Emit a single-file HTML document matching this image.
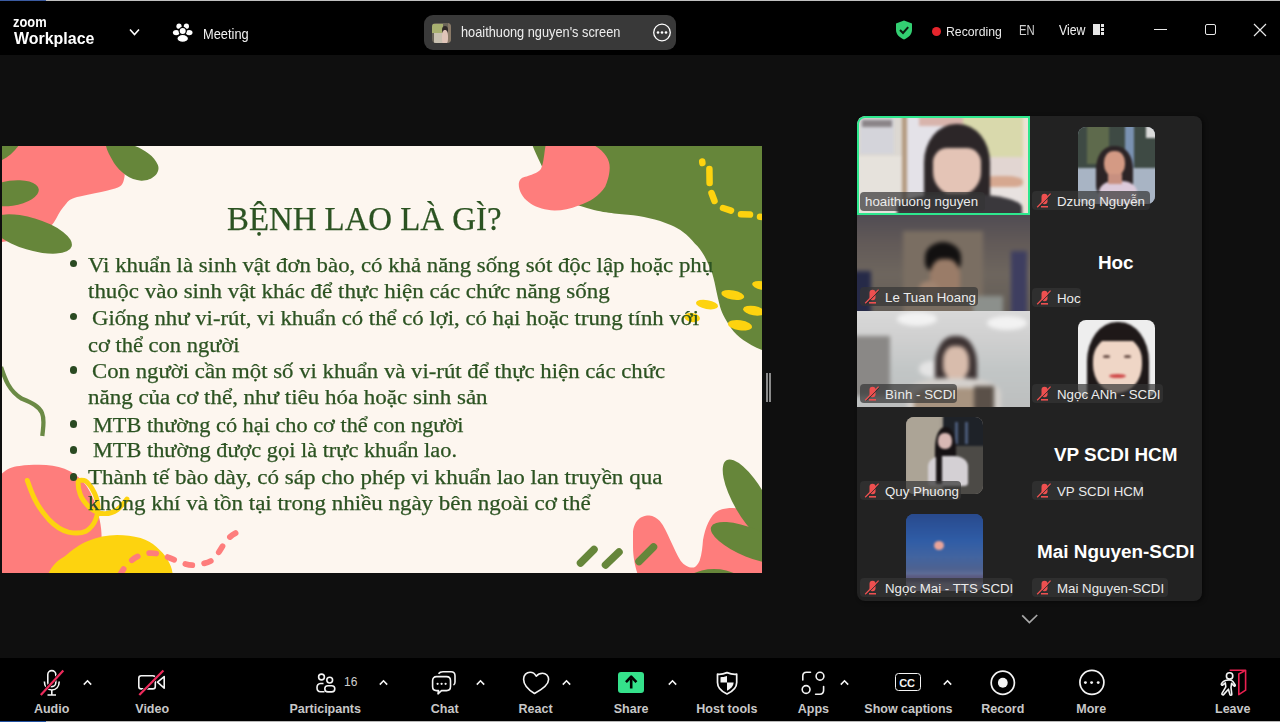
<!DOCTYPE html>
<html><head><meta charset="utf-8">
<style>
*{margin:0;padding:0;box-sizing:border-box}
html,body{width:1280px;height:722px;overflow:hidden;background:#0f0f0f;font-family:"Liberation Sans",sans-serif;color:#fff}
.a{position:absolute}
.t{position:absolute;white-space:nowrap;line-height:1}
#top{left:0;top:0;width:1280px;height:55px;background:#000}
#bot{left:0;top:658px;width:1280px;height:64px;background:#000}
#slide{left:2px;top:146px;width:760px;height:427px;background:#fdf6ef;overflow:hidden}
.sl{position:absolute;white-space:nowrap;font-family:"Liberation Serif",serif;color:#2c5322;font-size:19px;line-height:1;transform-origin:0 0;-webkit-text-stroke:0.25px #2c5322}
#gal{left:857px;top:116px;width:345px;height:485px;background:#222;border-radius:8px;overflow:hidden;box-shadow:2px 1px 4px rgba(0,0,0,.45)}
.lbl{position:absolute;height:19px;background:rgba(52,52,52,.7);border-radius:4px;font-size:13.3px;color:#ececec;white-space:nowrap;line-height:19px}
.tb{position:absolute;font-size:12.5px;font-weight:700;color:#c8c8c8;white-space:nowrap;line-height:1;transform:translateX(-50%)}
</style></head><body>
<div id="top" class="a">
<div class="a" style="left:0;top:0;width:1280px;height:1px;background:#c0c0c0"></div>
<div class="a" style="left:0;top:0;width:46px;height:1px;background:#3a5aa0"></div>
<div class="t" style="left:13px;top:15.2px;font-size:14px;font-weight:700;transform:scaleX(0.92);transform-origin:0 0">zoom</div>
<div class="t" style="left:14px;top:30.2px;font-size:16.3px;font-weight:700;transform:scaleX(0.98);transform-origin:0 0">Workplace</div>
<svg class="a" style="left:126px;top:26px" width="16" height="12" viewBox="0 0 16 12"><path d="M4 3.5 L8.5 8.5 L13 3.5" fill="none" stroke="#fff" stroke-width="1.6"/></svg>
<svg class="a" style="left:172px;top:22px" width="22" height="22" viewBox="0 0 22 22">
<circle cx="7" cy="4.2" r="2.6" fill="#fff"/><circle cx="14.4" cy="4.2" r="2.6" fill="#fff"/>
<ellipse cx="4.2" cy="10.6" rx="3.3" ry="2.6" fill="#fff"/><ellipse cx="17.2" cy="10.6" rx="3.3" ry="2.6" fill="#fff"/>
<circle cx="10.7" cy="9" r="3.6" fill="#fff" stroke="#000" stroke-width="1.2"/>
<ellipse cx="10.7" cy="16.4" rx="5.8" ry="3.9" fill="#fff" stroke="#000" stroke-width="1.2"/>
</svg>
<div class="t" style="left:202.5px;top:27.5px;font-size:13.8px;color:#f2f2f2;transform:scaleX(0.93);transform-origin:0 0">Meeting</div>
<div class="a" style="left:424px;top:15px;width:252px;height:35px;background:#393939;border-radius:9px"></div>
<div class="a" style="left:431.5px;top:22.5px;width:19px;height:20px;border-radius:4px;overflow:hidden;background:#6a6458"><div class="a" style="left:-2px;top:-2px;width:23px;height:24px;filter:blur(0.7px)">
<div class="a" style="left:2px;top:3px;width:11px;height:9px;background:#a8b070"></div>
<div class="a" style="left:4px;top:12px;width:9px;height:10px;background:#c8c0b0"></div>
<div class="a" style="left:12px;top:5px;width:6px;height:8px;border-radius:50%;background:#302828"></div>
<div class="a" style="left:12px;top:9px;width:6px;height:15px;border-radius:40%;background:#e0c4b8"></div>
<div class="a" style="left:18px;top:2px;width:4px;height:20px;background:#8a7a68"></div>
</div></div>
<div class="t" style="left:460.5px;top:24.8px;font-size:14.2px;color:#eee;transform:scaleX(0.9);transform-origin:0 0">hoaithuong nguyen's screen</div>
<svg class="a" style="left:651px;top:22px" width="22" height="22" viewBox="0 0 22 22"><circle cx="11" cy="10.5" r="8.3" fill="none" stroke="#fff" stroke-width="1.3"/><circle cx="7" cy="10.5" r="1.3" fill="#fff"/><circle cx="11" cy="10.5" r="1.3" fill="#fff"/><circle cx="15" cy="10.5" r="1.3" fill="#fff"/></svg>
<svg class="a" style="left:895px;top:20px" width="18" height="20" viewBox="0 0 18 20"><path d="M9 0.5 L17 3.5 L17 10 C17 14.5 13.5 17.5 9 19.5 C4.5 17.5 1 14.5 1 10 L1 3.5 Z" fill="#33cf72"/><path d="M5 10 L8 13 L13.2 7.2" fill="none" stroke="#0b1a10" stroke-width="2"/></svg>
<div class="a" style="left:931.5px;top:26.5px;width:9px;height:9px;border-radius:50%;background:#e5252c"></div>
<div class="t" style="left:945.5px;top:24.6px;font-size:13.3px;color:#eaeaea;transform:scaleX(0.92);transform-origin:0 0">Recording</div>
<div class="t" style="left:1018.6px;top:23.2px;font-size:14.2px;color:#cfcfcf;transform:scaleX(0.8);transform-origin:0 0">EN</div>
<div class="t" style="left:1058.5px;top:23.4px;font-size:14px;color:#f0f0f0;transform:scaleX(0.88);transform-origin:0 0">View</div>
<div class="a" style="left:1093.2px;top:24.3px;width:6.6px;height:10.5px;background:#e6e6e6"></div>
<div class="a" style="left:1101.3px;top:24.3px;width:3.2px;height:2.8px;background:#e6e6e6"></div>
<div class="a" style="left:1101.3px;top:28.2px;width:3.2px;height:2.8px;background:#e6e6e6"></div>
<div class="a" style="left:1101.3px;top:32px;width:3.2px;height:2.8px;background:#e6e6e6"></div>
<div class="a" style="left:1154px;top:28.6px;width:13px;height:1.2px;background:#e8e8e8"></div>
<div class="a" style="left:1204.8px;top:24px;width:11px;height:11px;border:1.2px solid #e8e8e8;border-radius:2px"></div>
<svg class="a" style="left:1252px;top:22px" width="16" height="16" viewBox="0 0 16 16"><path d="M2 2 L14 14 M14 2 L2 14" stroke="#e8e8e8" stroke-width="1.2"/></svg>
</div>
<div id="bot" class="a"></div>
<div class="a" style="left:0;top:721px;width:1280px;height:1px;background:#b8b8b8"></div><div class="a" style="left:0;top:721px;width:46px;height:1px;background:#2050a0"></div>
<svg class="a" style="left:38px;top:668px" width="28" height="30" viewBox="0 0 28 30">
<rect x="9.8" y="2.6" width="8" height="16" rx="4" fill="none" stroke="#f4f4f4" stroke-width="1.6"/>
<path d="M6.4 13.5 C6.4 19 9.5 22 13.8 22 C18 22 21.2 19 21.2 13.5" fill="none" stroke="#f4f4f4" stroke-width="1.6"/>
<path d="M13.8 22 L13.8 27 M9.5 27 L18 27" stroke="#f4f4f4" stroke-width="1.6"/>
<path d="M2.5 27 L25 2.8" stroke="#000" stroke-width="3.6"/>
<path d="M2.8 27 L25.3 2.6" stroke="#ee2b5c" stroke-width="2.2"/>
</svg>
<svg class="a" style="left:81.5px;top:678px" width="11" height="9" viewBox="0 0 11 9"><path d="M1.8 6.6 L5.5 2.8 L9.2 6.6" fill="none" stroke="#f4f4f4" stroke-width="1.6"/></svg>
<div class="tb" style="left:51.6px;top:703px">Audio</div>
<svg class="a" style="left:136px;top:668px" width="32" height="30" viewBox="0 0 32 30">
<rect x="2.8" y="7.7" width="16.5" height="13.2" rx="2.5" fill="none" stroke="#f4f4f4" stroke-width="1.6"/>
<path d="M21.5 14.2 L28.2 8.6 L28.2 20.2 Z" fill="none" stroke="#f4f4f4" stroke-width="1.6" stroke-linejoin="round"/>
<path d="M3 27.2 L27.3 2.8" stroke="#000" stroke-width="3.6"/>
<path d="M3.3 27.1 L27.4 2.6" stroke="#ee2b5c" stroke-width="2.2"/>
</svg>
<div class="tb" style="left:152.2px;top:703px">Video</div>
<svg class="a" style="left:313px;top:671px" width="26" height="24" viewBox="0 0 26 24">
<circle cx="8.5" cy="6" r="2.9" fill="none" stroke="#f4f4f4" stroke-width="1.6"/>
<circle cx="16.7" cy="9.1" r="2.9" fill="none" stroke="#f4f4f4" stroke-width="1.6"/>
<path d="M10.5 12.5 L7.5 12.5 C5 12.5 4 14.5 4 16.8 C4 19 5 20.7 7.5 20.7 L11.5 20.7" fill="none" stroke="#f4f4f4" stroke-width="1.6"/>
<rect x="11.8" y="14.7" width="10" height="6.2" rx="3.1" fill="none" stroke="#f4f4f4" stroke-width="1.6"/>
</svg>
<div class="t" style="left:344px;top:676.2px;font-size:12px;color:#cfcfcf">16</div>
<svg class="a" style="left:378.3px;top:678px" width="11" height="9" viewBox="0 0 11 9"><path d="M1.8 6.6 L5.5 2.8 L9.2 6.6" fill="none" stroke="#f4f4f4" stroke-width="1.6"/></svg>
<div class="tb" style="left:325.2px;top:703px">Participants</div>
<svg class="a" style="left:429px;top:669px" width="30" height="28" viewBox="0 0 30 28">
<path d="M9.5 4.8 C10.5 3.3 12 2.7 14 2.7 L22 2.7 C24.5 2.7 26 4.3 26 6.8 L26 13 C26 14.5 25.5 15.5 24.5 16" fill="none" stroke="#f4f4f4" stroke-width="1.6"/>
<path d="M7.5 7.6 L17.5 7.6 C20 7.6 21.5 9.2 21.5 11.7 L21.5 17.5 C21.5 20 20 21.6 17.5 21.6 L12.5 21.6 L9 24.8 L9.5 21.6 L7.5 21.6 C5 21.6 3.6 20 3.6 17.5 L3.6 11.7 C3.6 9.2 5 7.6 7.5 7.6 Z" fill="none" stroke="#f4f4f4" stroke-width="1.6" stroke-linejoin="round"/>
<circle cx="8.6" cy="14.8" r="1.1" fill="#f4f4f4"/><circle cx="12.6" cy="14.8" r="1.1" fill="#f4f4f4"/><circle cx="16.6" cy="14.8" r="1.1" fill="#f4f4f4"/>
</svg>
<svg class="a" style="left:474.6px;top:678px" width="11" height="9" viewBox="0 0 11 9"><path d="M1.8 6.6 L5.5 2.8 L9.2 6.6" fill="none" stroke="#f4f4f4" stroke-width="1.6"/></svg>
<div class="tb" style="left:444.7px;top:703px">Chat</div>
<svg class="a" style="left:520px;top:669px" width="32" height="28" viewBox="0 0 32 28">
<path d="M14.5 24.5 C8 20.5 3.6 16 3.6 10.2 C3.6 6 6.5 3.3 10.2 3.3 C13 3.3 15 5 16.2 7.2 C17.8 5.2 20 4.2 22.5 4.2 C26 4.2 28.6 7 28.6 10.5 C28.6 16 22.5 20.2 14.5 24.5 Z" fill="none" stroke="#f4f4f4" stroke-width="1.6" stroke-linejoin="round"/>
</svg>
<svg class="a" style="left:560.9px;top:678px" width="11" height="9" viewBox="0 0 11 9"><path d="M1.8 6.6 L5.5 2.8 L9.2 6.6" fill="none" stroke="#f4f4f4" stroke-width="1.6"/></svg>
<div class="tb" style="left:535.6px;top:703px">React</div>
<div class="a" style="left:618px;top:672px;width:25.8px;height:21.4px;border-radius:3px;background:#35e18b"></div>
<svg class="a" style="left:618px;top:672px" width="26" height="22" viewBox="0 0 26 22"><path d="M13.2 16.5 L13.2 6.5" stroke="#000" stroke-width="2.6"/><path d="M8 10.2 L13.2 4.6 L18.4 10.2" fill="none" stroke="#000" stroke-width="2.6" stroke-linejoin="round"/></svg>
<svg class="a" style="left:666.5px;top:678px" width="11" height="9" viewBox="0 0 11 9"><path d="M1.8 6.6 L5.5 2.8 L9.2 6.6" fill="none" stroke="#f4f4f4" stroke-width="1.6"/></svg>
<div class="tb" style="left:631.1px;top:703px">Share</div>
<svg class="a" style="left:715px;top:670px" width="24" height="26" viewBox="0 0 24 26">
<path d="M12 2.6 C15.5 4 18.8 4.5 21.7 4.2 L21.7 12.5 C21.7 18 17.5 21.5 12 24 C6.5 21.5 2.5 18 2.5 12.5 L2.5 4.2 C5.4 4.5 8.6 4 12 2.6 Z" fill="none" stroke="#f4f4f4" stroke-width="1.7" stroke-linejoin="round"/>
<path d="M12 6 C9.5 6.8 7.5 7.2 5.5 7.2 L5.5 12.6 L12 12.6 Z" fill="#f4f4f4"/>
<path d="M12 12.6 L18.6 12.6 C18.4 16.5 15.6 19 12 20.8 Z" fill="#f4f4f4"/>
</svg>
<div class="tb" style="left:726.9px;top:703px">Host tools</div>
<svg class="a" style="left:799px;top:669px" width="28" height="28" viewBox="0 0 28 28">
<path d="M3.8 11 L3.8 7 C3.8 4.5 5 3.2 7.5 3.2 L11.5 3.2" fill="none" stroke="#f4f4f4" stroke-width="1.6" stroke-linecap="round"/>
<path d="M24.6 17.5 L24.6 21.3 C24.6 23.8 23.4 25.2 20.8 25.2 L16.6 25.2" fill="none" stroke="#f4f4f4" stroke-width="1.6" stroke-linecap="round"/>
<circle cx="21" cy="7.2" r="3.9" fill="none" stroke="#f4f4f4" stroke-width="1.6"/>
<circle cx="7.1" cy="20.5" r="3.9" fill="none" stroke="#f4f4f4" stroke-width="1.6"/>
</svg>
<svg class="a" style="left:838.8px;top:678px" width="11" height="9" viewBox="0 0 11 9"><path d="M1.8 6.6 L5.5 2.8 L9.2 6.6" fill="none" stroke="#f4f4f4" stroke-width="1.6"/></svg>
<div class="tb" style="left:813.4px;top:703px">Apps</div>
<div class="a" style="left:895.3px;top:673.1px;width:25.3px;height:18.3px;border:1.7px solid #f4f4f4;border-radius:3.5px"></div>
<div class="t" style="left:899.2px;top:677.5px;font-size:11px;font-weight:700;color:#f4f4f4;letter-spacing:-0.2px">CC</div>
<svg class="a" style="left:942px;top:678px" width="11" height="9" viewBox="0 0 11 9"><path d="M1.8 6.6 L5.5 2.8 L9.2 6.6" fill="none" stroke="#f4f4f4" stroke-width="1.6"/></svg>
<div class="tb" style="left:908.4px;top:703px">Show captions</div>
<svg class="a" style="left:989px;top:669px" width="28" height="28" viewBox="0 0 28 28"><circle cx="13.8" cy="13.75" r="11.6" fill="none" stroke="#f4f4f4" stroke-width="1.7"/><circle cx="13.8" cy="13.75" r="4.9" fill="#f4f4f4"/></svg>
<div class="tb" style="left:1002.8px;top:703px">Record</div>
<svg class="a" style="left:1078px;top:668px" width="28" height="28" viewBox="0 0 28 28"><circle cx="13.9" cy="14.3" r="12" fill="none" stroke="#f4f4f4" stroke-width="1.7"/><circle cx="7.4" cy="14.6" r="1.45" fill="#f4f4f4"/><circle cx="13.6" cy="14.6" r="1.45" fill="#f4f4f4"/><circle cx="20.2" cy="14.6" r="1.45" fill="#f4f4f4"/></svg>
<div class="tb" style="left:1091.25px;top:703px">More</div>
<svg class="a" style="left:1218px;top:668px" width="32" height="30" viewBox="0 0 32 30">
<path d="M11.6 2.3 L27.6 2.3 L27.6 22.2 L20.8 26.6 L20.8 6 L26.4 3" fill="none" stroke="#ea2050" stroke-width="1.6" stroke-linejoin="round"/>
<circle cx="11.6" cy="7.9" r="3.2" fill="none" stroke="#f4f4f4" stroke-width="1.6"/>
<path d="M8.5 12.2 C6 12.6 4.5 13.8 3.4 15.8 C3 16.8 4.2 17.6 4.9 16.9 L7.3 14.8 L7.8 18.8 L4 25.3 C3.4 26.4 4.8 27.4 5.6 26.6 L10.4 21.2 L11.9 26.6 C12.2 27.6 13.9 27.4 13.8 26.3 L13 19.5 L13.6 15.4 L15.8 17.8 C16.4 18.4 17.6 17.8 17.2 17 L14.8 13.4 C14 12.2 11.5 11.7 8.5 12.2 Z" fill="none" stroke="#f4f4f4" stroke-width="1.6" stroke-linejoin="round"/>
</svg>
<div class="tb" style="left:1232.75px;top:703px">Leave</div>
<div id="slide" class="a">
<svg class="a" style="left:0;top:0" width="760" height="427" viewBox="0 0 760 427">
<path d="M0,0 L104.4,0 C114,8 123,18 122.7,28.9 C122,36 120,39 117.7,40.6 C114,43 100,46 77.8,50.5 C70,52 67,54 64.5,57.2 C60,62 57,67 54.5,72.1 C50,80 45,90 0,96 Z" fill="#fe7d7c"/>
<path d="M0,0 L16.3,0 C12,6 6,11 0,14 Z" fill="#66863a"/>
<ellipse cx="0" cy="0" rx="0" ry="0" fill="#66863a"/>
<path d="M104,0 L133,0 C143,4 152,10 155.9,19 C159,27 150,35 139.3,34.7 C128,34 118,26 112,17 C108,10 105,5 104,0 Z" fill="#66863a"/>
<ellipse cx="9" cy="47.2" rx="28" ry="12.6" transform="rotate(-8 9 47.2)" fill="#66863a"/>
<ellipse cx="29" cy="88" rx="42.5" ry="16" transform="rotate(17 29 88)" fill="#66863a"/>
<path d="M530.7,0 L760,0 L760,204 C745,198 735,190 729.7,183 C722,172 719,165 717.5,158.6 C713,140 712,130 708,122 C703,110 699,103 693,97.7 C685,88 678,83 668.7,79 C655,73 640,70 626,68.7 C610,67 600,67 576.7,59.4 C560,54 548,40 540,20.6 C536,12 533,6 530.7,0 Z" fill="#66863a"/>
<path d="M543.5,0 L593.3,0 C603,6 608,14 607.7,21.7 C607.5,30 605,36 603.3,40.5 C597,50 588,56 576.7,59.4 C568,63 560,64.5 552.3,64.4 C535,64 519,55 516.9,40.5 C516,33 521,31 524.6,30.6 C532,28 537,26 539,22.8 C542,16 542,8 543.5,0 Z" fill="#fe7d7c"/>
<g stroke="#fdd30f" stroke-width="6.5" stroke-linecap="round" fill="none">
<path d="M700.2,15.5 L700.4,17"/><path d="M707.4,23 L707.6,37"/><path d="M709.5,47 L712.5,55"/><path d="M721,62 L729,64.6"/><path d="M739,68.3 L748,68.6"/><path d="M758,70.8 L762,71"/>
</g>
<g fill="#fdd30f">
<ellipse cx="730.8" cy="149" rx="11.6" ry="4.6" transform="rotate(10 730.8 149)"/>
<ellipse cx="760" cy="139.5" rx="10" ry="4.2" transform="rotate(10 760 139.5)"/>
<ellipse cx="705" cy="158.6" rx="11.2" ry="4.5" transform="rotate(10 705 158.6)"/>
<ellipse cx="752" cy="164.7" rx="11" ry="4.7" transform="rotate(10 752 164.7)"/>
<ellipse cx="738" cy="179.3" rx="12.2" ry="5" transform="rotate(8 738 179.3)"/>
<ellipse cx="690" cy="171.5" rx="8" ry="4.5" transform="rotate(10 690 171.5)"/>
</g>
<path d="M-1,221 C3,233 7,245 20,252.8 C30,257 37,260 40,267 C43,274 41,282 40.3,290" fill="none" stroke="#6b8a45" stroke-width="4.3"/>
<path d="M0,327.6 C5,323 10,320.7 17.5,320 C24,319 30,318.8 37,318.8 C47,319 55,320 62.5,322.7 C70,326 76,330 80,334.4 C86,341 89,347 91.75,354 C94,360 96,366 97.6,373.5 C99,380 99.6,386 99.6,391 L100,427 L0,427 Z" fill="#fe7d7c"/>
<path d="M46.8,427 C50,420 56,414 62.5,410.6 C70,404 78,398 85.9,395 C95,391 105,389 115.2,389 C123,389 131,390 138.6,392 C145,394 150,397 154.25,400.8 C159,405 163,409 166,414.5 C168,418 170,422 170.5,427 Z" fill="#fdd30f"/>
<path d="M25.3,334.4 C28,342 30,348 33.2,354 C37,362 42,368 46.8,373.5 C52,379 58,384 66.4,386.1 C73,387.5 80,387 84,385.2 C89,382 92,378 93.7,373.5 C96,368 96.5,362 95.7,357.8 C95,351 92,346 89.8,342.2 C87,338 85,335 82,334.4 C79,334 76,334 76.1,336.3 C76,341 77,345 78.1,348 C80,354 84,358 87.8,361.7 C92,365 96,367 101.5,367.6 C107,368 112,366 115.2,363.7 C119,361 122,357 125,353" fill="none" stroke="#fdd30f" stroke-width="4.9" stroke-linecap="round"/>
<path d="M118,429 C122,421 130,412 139.25,409 C145,407 150,406.5 155.5,407.75 C162,409 167,412 173,414 C180,417 187,420 193,419 C200,418 206,417 210.5,414 C216,409 219,402 223,396.5 C227,391 231,388 237,385.5" fill="none" stroke="#fe7d7c" stroke-width="5.8" stroke-linecap="round" stroke-dasharray="7 12"/>
<path d="M635.3,427 C633,420 631,410 631,400.9 C631,395 631,390 631,385.3 C632,378 635,374 638.8,371.5 C641,370 644,369.4 647.4,369.4 C651,369.6 655,372 657.8,375 C662,380 665,387 668.2,394 C672,402 675,409 678.6,414.7 C682,419 686,421.6 690.7,421.6 C694,421.4 696,418 697.6,414.7 C700,408 700.5,400 701,394 C702,388 704,381 706.2,376.7 C709,371 712,367 716.6,364.6 C721,362.5 726,362 730.5,362 C740,362 750,364 760,366.3 L760,427 Z" fill="#fe7d7c"/>
<ellipse cx="748" cy="355" rx="47" ry="16" transform="rotate(60 748 355)" fill="#66863a"/>
<ellipse cx="749" cy="397" rx="43" ry="14.5" transform="rotate(22 749 397)" fill="#66863a"/>
<ellipse cx="712" cy="442" rx="32" ry="19" fill="#66863a"/>
<g stroke="#66863a" stroke-width="7.5" stroke-linecap="round">
<path d="M578.5,417 L592,403.5"/><path d="M603.5,419 L617,406"/><path d="M637,415.5 L651.5,401"/>
</g>
</svg>
<div class="sl" style="left:225.4px;top:57.4px;font-size:33px;transform:scaleX(0.995)">BỆNH LAO LÀ GÌ?</div>
<div class="sl" style="left:86.0px;top:109.1px;font-size:20px;transform:scaleX(1.1404)">Vi khuẩn là sinh vật đơn bào, có khả năng sống sót độc lập hoặc phụ</div>
<div class="a" style="left:67.7px;top:113.7px;width:7.4px;height:7.4px;border-radius:50%;background:#2a4a22"></div>
<div class="sl" style="left:86.0px;top:135.4px;font-size:20px;transform:scaleX(1.1483)">thuộc vào sinh vật khác để thực hiện các chức năng sống</div>
<div class="sl" style="left:90.0px;top:162.3px;font-size:20px;transform:scaleX(1.1365)">Giống như vi-rút, vi khuẩn có thể có lợi, có hại hoặc trung tính với</div>
<div class="a" style="left:67.7px;top:166.9px;width:7.4px;height:7.4px;border-radius:50%;background:#2a4a22"></div>
<div class="sl" style="left:86.0px;top:188.8px;font-size:20px;transform:scaleX(1.1248)">cơ thể con người</div>
<div class="sl" style="left:89.8px;top:215.3px;font-size:20px;transform:scaleX(1.1384)">Con người cần một số vi khuẩn và vi-rút để thực hiện các chức</div>
<div class="a" style="left:67.7px;top:220.3px;width:7.4px;height:7.4px;border-radius:50%;background:#2a4a22"></div>
<div class="sl" style="left:86.2px;top:241.4px;font-size:20px;transform:scaleX(1.1483)">năng của cơ thể, như tiêu hóa hoặc sinh sản</div>
<div class="sl" style="left:90.9px;top:268.5px;font-size:20px;transform:scaleX(1.1149)">MTB thường có hại cho cơ thể con người</div>
<div class="a" style="left:67.7px;top:274.3px;width:7.4px;height:7.4px;border-radius:50%;background:#2a4a22"></div>
<div class="sl" style="left:90.9px;top:294.3px;font-size:20px;transform:scaleX(1.1170)">MTB thường được gọi là trực khuẩn lao.</div>
<div class="a" style="left:67.7px;top:300.2px;width:7.4px;height:7.4px;border-radius:50%;background:#2a4a22"></div>
<div class="sl" style="left:86.2px;top:321.4px;font-size:20px;transform:scaleX(1.1522)">Thành tế bào dày, có sáp cho phép vi khuẩn lao lan truyền qua</div>
<div class="a" style="left:67.7px;top:327.2px;width:7.4px;height:7.4px;border-radius:50%;background:#2a4a22"></div>
<div class="sl" style="left:86.2px;top:347.3px;font-size:20px;transform:scaleX(1.1483)">không khí và tồn tại trong nhiều ngày bên ngoài cơ thể</div>
</div>
<div class="a" style="left:766px;top:373px;width:1.6px;height:29px;background:#8a8a8a"></div><div class="a" style="left:769.2px;top:373px;width:1.6px;height:29px;background:#8a8a8a"></div>
<!--GAL--><div id="gal" class="a">
<div class="a" style="left:0;top:0;width:173px;height:98.5px;overflow:hidden;border-radius:8px 0 0 0;background:#dcd8d2">
<div class="a" style="left:-4px;top:-4px;width:181px;height:105px;filter:blur(1.6px)">
<div class="a" style="left:7px;top:6px;width:34px;height:36px;background:#d4d4da"></div>
<div class="a" style="left:9px;top:8px;width:30px;height:7px;background:#8a8488"></div>
<div class="a" style="left:0;top:44px;width:52px;height:61px;background:#e6e2dc"></div>
<div class="a" style="left:49px;top:0;width:5px;height:105px;background:#b49a80"></div>
<div class="a" style="left:54px;top:0;width:42px;height:105px;background:#e4e2e8"></div>
<div class="a" style="left:66px;top:4px;width:50px;height:10px;background:#d8b4ac"></div>
<div class="a" style="left:110px;top:0;width:65px;height:45px;background:#d9d9ac"></div>
<div class="a" style="left:116px;top:45px;width:60px;height:30px;background:#e2d6d2"></div>
<div class="a" style="left:128px;top:64px;width:42px;height:12px;background:#d6a890;border-radius:40%"></div>
<div class="a" style="left:116px;top:75px;width:60px;height:30px;background:#e8e2e0"></div>
<div class="a" style="left:170px;top:0;width:8px;height:105px;background:#ece2d6"></div>
<div class="a" style="left:71px;top:12px;width:66px;height:80px;border-radius:48% 48% 12% 12%;background:#2c2628"></div>
<div class="a" style="left:80px;top:36px;width:48px;height:48px;border-radius:30% 30% 50% 50%;background:#e4c4b6"></div>
<div class="a" style="left:44px;top:82px;width:125px;height:30px;border-radius:45% 45% 0 0;background:#3a383c"></div>
</div>
<div class="a" style="left:0;top:0;width:173px;height:98.5px;border:2.6px solid #2ee88e;border-radius:8px 0 0 0"></div>
</div>
<div class="lbl" style="left:3px;top:75.5px;width:125px"><span class="a" style="left:5px;top:0.7px">hoaithuong nguyen</span></div>
<div class="a" style="left:221px;top:10.5px;width:77px;height:77px;border-radius:8px;overflow:hidden;background:#9aa6b8">
<div class="a" style="left:-3px;top:-3px;width:83px;height:83px;filter:blur(1.2px)">
<div class="a" style="left:0;top:0;width:83px;height:44px;background:#3e4a44"></div>
<div class="a" style="left:12px;top:0;width:22px;height:40px;background:#5e6a4c"></div>
<div class="a" style="left:50px;top:0;width:9px;height:83px;background:#7a92b2"></div>
<div class="a" style="left:71px;top:0;width:12px;height:14px;background:#dadada"></div>
<div class="a" style="left:0;top:44px;width:83px;height:39px;background:#a8b4c4"></div>
<div class="a" style="left:21px;top:22px;width:37px;height:50px;border-radius:45% 45% 20% 20%;background:#2c2426"></div>
<div class="a" style="left:29px;top:27px;width:21px;height:25px;border-radius:45%;background:#d49a84"></div>
<div class="a" style="left:24px;top:57px;width:38px;height:28px;border-radius:40% 40% 0 0;background:#dccadb"></div>
<div class="a" style="left:33px;top:50px;width:14px;height:10px;background:#c89080"></div>
</div></div>
<div class="lbl" style="left:175px;top:75px;width:118px"><svg class="a" style="left:4px;top:2px" width="16" height="15" viewBox="0 0 16 15"><rect x="5.5" y="0.8" width="6" height="10.5" rx="3" fill="#ee5050"/><path d="M5 13.8 L12 13.8" stroke="#ee5050" stroke-width="1.6"/><path d="M1.2 14.2 L14.6 0.6" stroke="#ee5050" stroke-width="1.3"/><path d="M2.6 14.6 L15.4 1.6" stroke="#2b2b2b" stroke-width="0.9"/></svg><span class="a" style="left:25px;top:0.7px">Dzung Nguyễn</span></div>
<div class="a" style="left:0;top:98.5px;width:173px;height:96.5px;overflow:hidden;background:#5e5856">
<div class="a" style="left:-4px;top:-4px;width:181px;height:105px;filter:blur(2px)">
<div class="a" style="left:0;top:0;width:181px;height:105px;background:linear-gradient(180deg,#4e4a52 0%,#625a58 30%,#6e665e 60%,#625c56 100%)"></div>
<div class="a" style="left:50px;top:20px;width:80px;height:85px;background:#7a6e62"></div>
<div class="a" style="left:0;top:60px;width:18px;height:50px;background:#262a48"></div>
<div class="a" style="left:158px;top:40px;width:16px;height:65px;background:#3e3e60"></div>
<div class="a" style="left:72px;top:31px;width:36px;height:30px;border-radius:50% 50% 30% 30%;background:#121010"></div>
<div class="a" style="left:77px;top:48px;width:30px;height:42px;border-radius:40%;background:#9a7c68"></div>
<div class="a" style="left:66px;top:70px;width:20px;height:16px;border-radius:50%;background:#a08470"></div>
<div class="a" style="left:120px;top:85px;width:30px;height:20px;background:#8c908c"></div>
</div></div>
<div class="lbl" style="left:3px;top:171px;width:118px"><svg class="a" style="left:4px;top:2px" width="16" height="15" viewBox="0 0 16 15"><rect x="5.5" y="0.8" width="6" height="10.5" rx="3" fill="#ee5050"/><path d="M5 13.8 L12 13.8" stroke="#ee5050" stroke-width="1.6"/><path d="M1.2 14.2 L14.6 0.6" stroke="#ee5050" stroke-width="1.3"/><path d="M2.6 14.6 L15.4 1.6" stroke="#2b2b2b" stroke-width="0.9"/></svg><span class="a" style="left:25px;top:0.7px">Le Tuan Hoang</span></div>
<div class="t" style="left:172.5px;top:138.4px;width:172.5px;text-align:center;font-size:18.9px;font-weight:700;color:#fff">Hoc</div>
<div class="lbl" style="left:175px;top:172px;width:49px"><svg class="a" style="left:4px;top:2px" width="16" height="15" viewBox="0 0 16 15"><rect x="5.5" y="0.8" width="6" height="10.5" rx="3" fill="#ee5050"/><path d="M5 13.8 L12 13.8" stroke="#ee5050" stroke-width="1.6"/><path d="M1.2 14.2 L14.6 0.6" stroke="#ee5050" stroke-width="1.3"/><path d="M2.6 14.6 L15.4 1.6" stroke="#2b2b2b" stroke-width="0.9"/></svg><span class="a" style="left:25px;top:0.7px">Hoc</span></div>
<div class="a" style="left:0;top:195px;width:173px;height:96px;overflow:hidden;background:#c8c8c8">
<div class="a" style="left:-5px;top:-5px;width:183px;height:106px;filter:blur(2.2px)">
<div class="a" style="left:0;top:0;width:183px;height:106px;background:linear-gradient(180deg,#dadada 0%,#d0d0d0 30%,#c2c6c6 60%,#bcbebe 100%)"></div>
<div class="a" style="left:45px;top:6px;width:40px;height:14px;border-radius:50%;background:#f2f2f2"></div>
<div class="a" style="left:135px;top:10px;width:40px;height:14px;border-radius:50%;background:#f2f2f2"></div>
<div class="a" style="left:0;top:30px;width:38px;height:60px;background:#8a8886"></div>
<div class="a" style="left:67px;top:55px;width:25px;height:16px;background:#e4e4e4;border-radius:50%"></div>
<div class="a" style="left:83px;top:30px;width:42px;height:62px;border-radius:45% 45% 15% 15%;background:#3c3232"></div>
<div class="a" style="left:91px;top:40px;width:26px;height:34px;border-radius:42%;background:#d8bcac"></div>
<div class="a" style="left:55px;top:72px;width:94px;height:38px;border-radius:40% 40% 0 0;background:#d4d0cc"></div>
<div class="a" style="left:62px;top:82px;width:80px;height:30px;border-radius:30% 30% 0 0;background:#a89480"></div>
<div class="a" style="left:122px;top:80px;width:20px;height:30px;background:#5a5048"></div>
</div></div>
<div class="lbl" style="left:3px;top:268px;width:97px"><svg class="a" style="left:4px;top:2px" width="16" height="15" viewBox="0 0 16 15"><rect x="5.5" y="0.8" width="6" height="10.5" rx="3" fill="#ee5050"/><path d="M5 13.8 L12 13.8" stroke="#ee5050" stroke-width="1.6"/><path d="M1.2 14.2 L14.6 0.6" stroke="#ee5050" stroke-width="1.3"/><path d="M2.6 14.6 L15.4 1.6" stroke="#2b2b2b" stroke-width="0.9"/></svg><span class="a" style="left:25px;top:0.7px">Bình - SCDI</span></div>
<div class="a" style="left:221px;top:204px;width:77px;height:77px;border-radius:8px;overflow:hidden;background:#eeeeee">
<div class="a" style="left:-3px;top:-3px;width:83px;height:83px;filter:blur(1px)">
<div class="a" style="left:12px;top:5px;width:62px;height:82px;border-radius:48% 48% 10% 10%;background:#1e1818"></div>
<div class="a" style="left:18px;top:20px;width:49px;height:56px;border-radius:42% 42% 50% 50%;background:#efd6c6"></div>
<div class="a" style="left:24px;top:12px;width:36px;height:12px;border-radius:50% 50% 0 0;background:#1e1818"></div>
<div class="a" style="left:34px;top:57px;width:17px;height:4px;border-radius:50%;background:#d04a4a"></div>
<div class="a" style="left:28px;top:38px;width:7px;height:3px;border-radius:50%;background:#6a5048"></div>
<div class="a" style="left:49px;top:38px;width:7px;height:3px;border-radius:50%;background:#6a5048"></div>
</div></div>
<div class="lbl" style="left:175px;top:268px;width:131px"><svg class="a" style="left:4px;top:2px" width="16" height="15" viewBox="0 0 16 15"><rect x="5.5" y="0.8" width="6" height="10.5" rx="3" fill="#ee5050"/><path d="M5 13.8 L12 13.8" stroke="#ee5050" stroke-width="1.6"/><path d="M1.2 14.2 L14.6 0.6" stroke="#ee5050" stroke-width="1.3"/><path d="M2.6 14.6 L15.4 1.6" stroke="#2b2b2b" stroke-width="0.9"/></svg><span class="a" style="left:25px;top:0.7px">Ngọc ANh - SCDI</span></div>
<div class="a" style="left:48.5px;top:301px;width:77px;height:77px;border-radius:8px;overflow:hidden;background:#9c948c">
<div class="a" style="left:-3px;top:-3px;width:83px;height:83px;filter:blur(1px)">
<div class="a" style="left:0;top:0;width:40px;height:83px;background:#a49c90"></div>
<div class="a" style="left:3px;top:0;width:34px;height:83px;background:#aca496"></div>
<div class="a" style="left:40px;top:0;width:43px;height:32px;background:#1e2228"></div>
<div class="a" style="left:52px;top:8px;width:3px;height:22px;background:#4a5a78"></div>
<div class="a" style="left:62px;top:8px;width:3px;height:22px;background:#4a5a78"></div>
<div class="a" style="left:40px;top:32px;width:43px;height:51px;background:#4c4a46"></div>
<div class="a" style="left:32px;top:13px;width:21px;height:48px;border-radius:45% 45% 20% 20%;background:#161214"></div>
<div class="a" style="left:35px;top:19px;width:14px;height:16px;border-radius:45%;background:#d8b8b4"></div>
<div class="a" style="left:25px;top:42px;width:40px;height:30px;border-radius:35% 35% 10% 10%;background:#d4d0d4"></div>
<div class="a" style="left:33px;top:40px;width:6px;height:30px;background:#181416"></div>
</div></div>
<div class="lbl" style="left:3px;top:365px;width:101px"><svg class="a" style="left:4px;top:2px" width="16" height="15" viewBox="0 0 16 15"><rect x="5.5" y="0.8" width="6" height="10.5" rx="3" fill="#ee5050"/><path d="M5 13.8 L12 13.8" stroke="#ee5050" stroke-width="1.6"/><path d="M1.2 14.2 L14.6 0.6" stroke="#ee5050" stroke-width="1.3"/><path d="M2.6 14.6 L15.4 1.6" stroke="#2b2b2b" stroke-width="0.9"/></svg><span class="a" style="left:25px;top:0.7px">Quy Phuong</span></div>
<div class="t" style="left:172.5px;top:330.1px;width:172.5px;text-align:center;font-size:18.9px;font-weight:700;color:#fff">VP SCDI HCM</div>
<div class="lbl" style="left:175px;top:365px;width:111px"><svg class="a" style="left:4px;top:2px" width="16" height="15" viewBox="0 0 16 15"><rect x="5.5" y="0.8" width="6" height="10.5" rx="3" fill="#ee5050"/><path d="M5 13.8 L12 13.8" stroke="#ee5050" stroke-width="1.6"/><path d="M1.2 14.2 L14.6 0.6" stroke="#ee5050" stroke-width="1.3"/><path d="M2.6 14.6 L15.4 1.6" stroke="#2b2b2b" stroke-width="0.9"/></svg><span class="a" style="left:25px;top:0.7px">VP SCDI HCM</span></div>
<div class="a" style="left:48.5px;top:398px;width:77px;height:77px;border-radius:8px;overflow:hidden;background:#2e5aa0">
<div class="a" style="left:-3px;top:-3px;width:83px;height:83px;filter:blur(1.2px);background:linear-gradient(180deg,#28488a 0%,#2f5ca6 35%,#4264a0 55%,#4e6290 70%,#7a7ea0 85%,#a29aae 100%)">
<div class="a" style="left:31px;top:30px;width:10px;height:9px;border-radius:50%;background:#eaa49a"></div>
<div class="a" style="left:0;top:64px;width:83px;height:7px;background:#5a5a80"></div>
</div></div>
<div class="lbl" style="left:3px;top:462px;width:153px"><svg class="a" style="left:4px;top:2px" width="16" height="15" viewBox="0 0 16 15"><rect x="5.5" y="0.8" width="6" height="10.5" rx="3" fill="#ee5050"/><path d="M5 13.8 L12 13.8" stroke="#ee5050" stroke-width="1.6"/><path d="M1.2 14.2 L14.6 0.6" stroke="#ee5050" stroke-width="1.3"/><path d="M2.6 14.6 L15.4 1.6" stroke="#2b2b2b" stroke-width="0.9"/></svg><span class="a" style="left:25px;top:0.7px">Ngọc Mai - TTS SCDI</span></div>
<div class="t" style="left:172.5px;top:427.1px;width:172.5px;text-align:center;font-size:18.9px;font-weight:700;color:#fff">Mai Nguyen-SCDI</div>
<div class="lbl" style="left:175px;top:462px;width:136px"><svg class="a" style="left:4px;top:2px" width="16" height="15" viewBox="0 0 16 15"><rect x="5.5" y="0.8" width="6" height="10.5" rx="3" fill="#ee5050"/><path d="M5 13.8 L12 13.8" stroke="#ee5050" stroke-width="1.6"/><path d="M1.2 14.2 L14.6 0.6" stroke="#ee5050" stroke-width="1.3"/><path d="M2.6 14.6 L15.4 1.6" stroke="#2b2b2b" stroke-width="0.9"/></svg><span class="a" style="left:25px;top:0.7px">Mai Nguyen-SCDI</span></div>
</div>
<svg class="a" style="left:1018px;top:610px" width="22" height="16" viewBox="0 0 22 16"><path d="M4.2 5.3 L11.4 12.6 L19.2 5" fill="none" stroke="#a8a8a8" stroke-width="1.7"/></svg>
<!--/GAL-->
</body></html>
